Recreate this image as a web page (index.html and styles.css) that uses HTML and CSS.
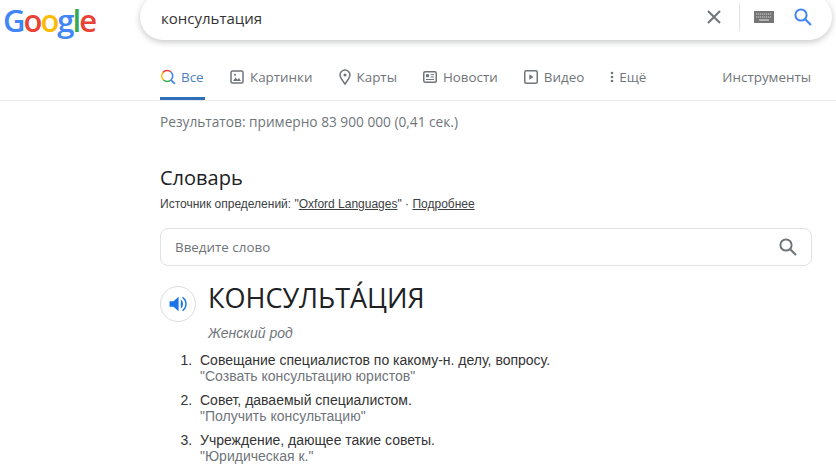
FILE: index.html
```html
<!DOCTYPE html>
<html lang="ru">
<head>
    <meta charset="UTF-8">
    <title>консультация - Поиск в Google</title>
    <link rel="stylesheet" href="styles.css">
</head>
<body>

    <header class="top">
        <div class="logo"><span class="blue">G</span><span class="red">o</span><span class="yellow">o</span><span class="blue">g</span><span class="green">l</span><span class="red">e</span></div>
        <div class="search">
            <span class="query">консультация</span>
            <svg class="clear" width="16" height="16" viewBox="0 0 16 16"><path d="M2 2l12 12M14 2L2 14" stroke="#70757a" stroke-width="2" fill="none"/></svg>
            <span class="divider"></span>
            <svg class="keyboard" width="20" height="12" viewBox="0 0 20 12">
                <rect width="20" height="12" fill="#757575"/>
                <path d="M2 3h16M2 6h16" stroke="#d8d8d8" stroke-width="1.2" stroke-dasharray="1.2 .8"/>
                <path d="M5 9h10" stroke="#d8d8d8" stroke-width="1.2"/>
            </svg>
            <svg class="go" width="20" height="20" viewBox="0 0 20 20"><circle cx="8" cy="8" r="5.6" stroke="#4285f4" stroke-width="2" fill="none"/><path d="M12 12l6 6" stroke="#4285f4" stroke-width="2.2" fill="none"/></svg>
        </div>
    </header>

    <nav class="tabs">
        <a class="tab active">
            <svg width="16" height="16" viewBox="0 0 16 16">
                <path d="M11 11A5.6 5.6 0 0 0 11 3" stroke="#4285f4" stroke-width="1.6" fill="none"/>
                <path d="M11 3A5.6 5.6 0 0 0 3 3.4" stroke="#ea4335" stroke-width="1.6" fill="none"/>
                <path d="M3 3.4A5.6 5.6 0 0 0 3.5 11" stroke="#fbbc05" stroke-width="1.6" fill="none"/>
                <path d="M3.5 11A5.6 5.6 0 0 0 11 11" stroke="#34a853" stroke-width="1.6" fill="none"/>
                <path d="M10.8 10.8l4 4" stroke="#4285f4" stroke-width="1.8" fill="none"/>
            </svg>
            Все
        </a>
        <a class="tab">
            <svg width="14" height="14" viewBox="0 0 14 14"><rect x="1" y="1" width="12" height="12" rx="1.5" stroke="#70757a" stroke-width="1.5" fill="none"/><path d="M3 11l2.5-3.5 2 2.2L9 8l2 3z" fill="#70757a"/><circle cx="5" cy="4.8" r="1" fill="#70757a"/></svg>
            Картинки
        </a>
        <a class="tab">
            <svg width="12" height="16" viewBox="0 0 12 16"><path d="M6 15C3 11 1 8.400 1 6a5 5 0 0 1 10 0c0 2.400-2 5-5 9z" stroke="#70757a" stroke-width="1.5" fill="none"/><circle cx="6" cy="6" r="1.500" fill="#70757a"/></svg>
            Карты
        </a>
        <a class="tab">
            <svg width="14" height="12" viewBox="0 0 14 12"><rect x=".75" y=".75" width="12.500" height="10.500" rx="1.500" stroke="#70757a" stroke-width="1.500" fill="none"/><rect x="3" y="3.200" width="3" height="3" fill="#70757a"/><path d="M7.500 3.700H11M7.500 6H11M3 8.500h8" stroke="#70757a" stroke-width="1"/></svg>
            Новости
        </a>
        <a class="tab">
            <svg width="14" height="14" viewBox="0 0 14 14"><rect x=".75" y=".75" width="12.500" height="12.500" rx="1.500" stroke="#70757a" stroke-width="1.500" fill="none"/><path d="M5.300 4.200v5.600L9.500 7z" fill="#70757a"/></svg>
            Видео
        </a>
        <a class="tab more">
            <svg width="4" height="12" viewBox="0 0 4 12"><circle cx="2" cy="2" r="1.300" fill="#70757a"/><circle cx="2" cy="6" r="1.300" fill="#70757a"/><circle cx="2" cy="10" r="1.300" fill="#70757a"/></svg>
            Ещё
        </a>
        <a class="tab tools">Инструменты</a>
    </nav>

    <main class="content">
        <div class="stats">Результатов: примерно 83 900 000 (0,41 сек.)</div>

        <h2 class="dict-title">Словарь</h2>
        <div class="source">Источник определений: "<u>Oxford Languages</u>" · <u>Подробнее</u></div>

        <div class="word-box">
            <span class="placeholder">Введите слово</span>
            <svg width="20" height="20" viewBox="0 0 20 20"><circle cx="8" cy="8" r="5.600" stroke="#70757a" stroke-width="2" fill="none"/><path d="M12 12l6 6" stroke="#70757a" stroke-width="2.200" fill="none"/></svg>
        </div>

        <div class="headword">
            <span class="speaker">
                <svg width="18" height="18" viewBox="1 1 15 16"><path d="M1 6.500v5h3.500L9 15.500v-13L4.500 6.500z" fill="#1a73e8"/><path d="M11 5a5 5 0 0 1 0 8z" fill="#1a73e8"/><path d="M12.500 3.200a7 7 0 0 1 0 11.600" stroke="#1a73e8" stroke-width="1.300" fill="none"/></svg>
            </span>
            <span class="word">КОНСУЛЬТА́ЦИЯ</span>
        </div>
        <div class="gender">Женский род</div>

        <ol class="defs">
            <li>Совещание специалистов по какому-н. делу, вопросу.<span class="example">"Созвать консультацию юристов"</span></li>
            <li>Совет, даваемый специалистом.<span class="example">"Получить консультацию"</span></li>
            <li>Учреждение, дающее такие советы.<span class="example">"Юридическая к."</span></li>
        </ol>
    </main>

</body>
</html>
```

FILE: styles.css
```css
html, body {
    height: 465px;
    overflow: hidden;
}
body {
    margin: 0;
    font-family: 'Liberation Sans', Arial, sans-serif;
    color: #202124;
    background-color: #ffffff;
}
.top {
    display: flex;
    height: 40px;
}
.logo {
    width: 140px;
    padding-left: 3px;
    box-sizing: border-box;
    font-family: 'Open Sans', sans-serif;
    font-size: 31px;
    font-weight: 600;
    line-height: 40px;
    height: 40px;
    letter-spacing: -2px;
}
.blue { color: #4285f4; }
.red { color: #ea4335; }
.yellow { color: #fbbc05; }
.green { color: #34a853; }
.search {
    display: flex;
    align-items: center;
    width: 692px;
    height: 46px;
    margin-top: -6px;
    padding: 0 19px 0 21px;
    box-sizing: border-box;
    flex-shrink: 0;
    border-radius: 24px;
    box-shadow: 0 2px 6px rgba(32, 33, 36, 0.26);
    background-color: #fff;
}
.query {
    flex: 1;
    font-family: 'Open Sans', sans-serif;
    font-size: 15px;
    color: #333;
    padding-top: 1px;
}
.clear {
    margin-right: 17px;
}
.divider {
    width: 1px;
    height: 28px;
    background-color: #dfe1e5;
    margin-right: 14px;
}
.keyboard {
    margin-right: 19px;
}
.tabs {
    display: flex;
    align-items: center;
    height: 61px;
    padding: 0 25px 0 160px;
    box-sizing: border-box;
    border-bottom: 1px solid #e8eaed;
    font-family: 'Open Sans', sans-serif;
    font-size: 13.4px;
    color: #70757a;
}
.tab {
    display: flex;
    align-items: center;
    gap: 6px;
    height: 60px;
    padding-top: 14px;
    box-sizing: border-box;
    margin-right: 26px;
    white-space: nowrap;
}
.tab.active {
    gap: 5px;
    min-width: 45px;
    margin-right: 25px;
    color: #4a7fc1;
    border-bottom: 3px solid #2f6fb8;
    padding-top: 17px;
}
.more {
    gap: 5px;
}
.tools {
    margin-left: auto;
    margin-right: 0;
}
.content {
    padding-left: 160px;
    width: 652px;
}
.stats {
    margin-top: 12px;
    font-family: 'Open Sans', sans-serif;
    font-size: 13.7px;
    line-height: 18px;
    color: #70757a;
}
.dict-title {
    margin: 35px 0 0;
    font-family: 'Open Sans', sans-serif;
    font-size: 20px;
    line-height: 24px;
    font-weight: 400;
    color: #202124;
}
.source {
    margin-top: 6px;
    font-size: 12px;
    line-height: 16px;
    color: #3c4043;
}
.word-box {
    display: flex;
    align-items: center;
    justify-content: space-between;
    height: 36px;
    margin-top: 16px;
    padding: 0 13px 0 14px;
    border: 1px solid #dfe1e5;
    border-radius: 8px;
}
.placeholder {
    font-family: 'Open Sans', sans-serif;
    font-size: 13.4px;
    color: #70757a;
}
.headword {
    display: flex;
    align-items: center;
    gap: 12px;
    margin-top: 15px;
}
.speaker {
    display: flex;
    align-items: center;
    justify-content: center;
    width: 34px;
    height: 34px;
    border: 1px solid #dadce0;
    border-radius: 50%;
    margin-top: 5px;
}
.word {
    font-family: 'Open Sans', sans-serif;
    font-size: 27px;
    line-height: 32px;
    color: #202124;
    margin-top: -7px;
}
.gender {
    margin: 2px 0 0 48px;
    font-size: 14px;
    line-height: 18px;
    font-style: italic;
    color: #70757a;
}
.defs {
    margin: 10px 0 0;
    padding-left: 40px;
    font-size: 14px;
    line-height: 16px;
    color: #333;
}
.defs li {
    margin-bottom: 8px;
}
.defs li::marker {
    content: counter(list-item) ".\00a0\00a0";
}
.example {
    display: block;
    color: #70757a;
}
```
